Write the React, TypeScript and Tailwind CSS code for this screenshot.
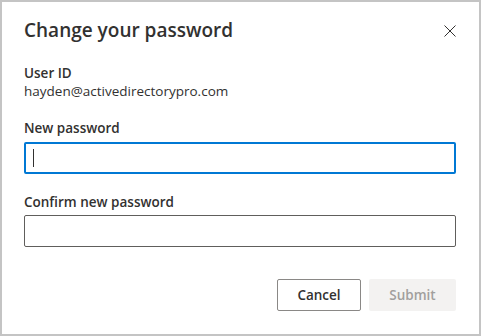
import React from "react";

export default function App() {
  return (
    <div
      className="w-[481px] h-[336px] border-2 border-[#c4c4c4] bg-white text-[#323130] pl-[22px] pr-[23px] pt-[14px] flex flex-col"
      style={{ fontFamily: '"Open Sans", "Noto Sans", sans-serif' }}
    >
      <div className="flex items-center justify-between h-[28px]">
        <h1 className="text-[19px] leading-[28px] font-semibold">Change your password</h1>
        <svg width="12" height="12" viewBox="0 0 12 12" className="mt-[2px]" aria-label="Close">
          <path d="M0.5 0.5 L11.5 11.5 M11.5 0.5 L0.5 11.5" stroke="#323130" strokeWidth="1" fill="none" />
        </svg>
      </div>
      <div className="mt-[21px] text-[13.5px] leading-[16px] font-semibold">User ID</div>
      <div className="mt-[2px] text-[13.5px] leading-[16px]">hayden@activedirectorypro.com</div>
      <label className="mt-[19px] text-[13.5px] leading-[20px] font-semibold">New password</label>
      <div className="mt-[4px] h-[32px] border-2 border-[#0078d4] rounded-[2px] flex items-center pl-[7px]">
        <div className="w-[1px] h-[18px] bg-[#323130]" />
      </div>
      <label className="mt-[18px] text-[13.5px] leading-[20px] font-semibold">Confirm new password</label>
      <div className="mt-[3px] h-[32px] border border-[#605e5c] rounded-[2px]" />
      <div className="mt-[32px] flex justify-end gap-[8px]">
        <button className="w-[84px] h-[32px] border border-[#8a8886] rounded-[2px] bg-white text-[13.5px] font-semibold text-[#323130]">
          Cancel
        </button>
        <button className="w-[87px] h-[32px] rounded-[2px] bg-[#f3f2f1] text-[13.5px] font-semibold text-[#a19f9d]">
          Submit
        </button>
      </div>
    </div>
  );
}
